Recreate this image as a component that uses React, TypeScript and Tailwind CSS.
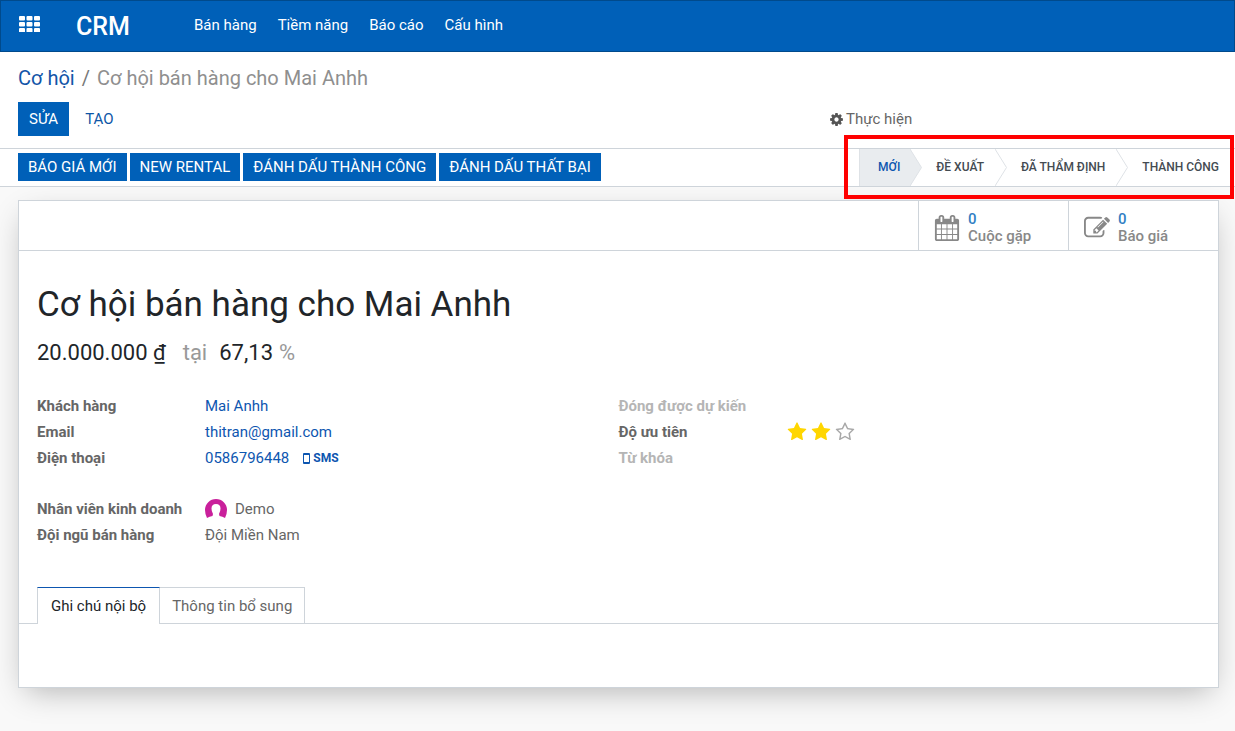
import { ReactNode } from "react";

const ICONS = {
  cog: "M1152 896q0-106-75-181t-181-75-181 75-75 181 75 181 181 75 181-75 75-181zm512-109v222q0 12-8 23t-20 13l-185 28q-19 54-39 91 35 50 107 138 10 12 10 25t-9 23q-27 37-99 108t-94 71q-12 0-26-9l-138-108q-44 23-91 38-16 136-29 186-7 28-36 28h-222q-14 0-24.5-8.5t-11.5-21.5l-28-184q-49-16-90-37l-141 107q-10 9-25 9-14 0-25-11-126-114-165-168-7-10-7-23 0-12 8-23 15-21 51-66.5t54-70.5q-27-50-41-99l-183-27q-13-2-21-12.5t-8-23.5v-222q0-12 8-23t19-13l186-28q14-46 39-92-40-57-107-138-10-12-10-24 0-10 9-23 26-36 98.5-107.5t94.5-71.5q13 0 26 10l138 107q44-23 91-38 16-136 29-186 7-28 36-28h222q14 0 24.5 8.5t11.5 21.5l28 184q49 16 90 37l142-107q9-9 24-9 13 0 25 10 129 119 165 170 7 8 7 22 0 12-8 23-15 21-51 66.5t-54 70.5q26 50 41 98l183 28q13 2 21 12.5t8 23.5z",
  calendar: "M192 1664h288v-288h-288v288zm352 0h320v-288h-320v288zm-352-352h288v-320h-288v320zm352 0h320v-320h-320v320zm-352-384h288v-288h-288v288zm736 736h320v-288h-320v288zm-384-736h320v-288h-320v288zm768 736h288v-288h-288v288zm-384-352h320v-320h-320v320zm-352-864v-288q0-13-9.5-22.5t-22.5-9.5h-64q-13 0-22.5 9.5t-9.5 22.5v288q0 13 9.5 22.5t22.5 9.5h64q13 0 22.5-9.5t9.5-22.5zm736 864h288v-320h-288v320zm-384-384h320v-288h-320v288zm384 0h288v-288h-288v288zm32-480v-288q0-13-9.5-22.5t-22.5-9.5h-64q-13 0-22.5 9.5t-9.5 22.5v288q0 13 9.5 22.5t22.5 9.5h64q13 0 22.5-9.5t9.5-22.5zm384-64v1280q0 52-38 90t-90 38h-1408q-52 0-90-38t-38-90v-1280q0-52 38-90t90-38h128v-96q0-66 47-113t113-47h64q66 0 113 47t47 113v96h384v-96q0-66 47-113t113-47h64q66 0 113 47t47 113v96h128q52 0 90 38t38 90z",
  edit: "M888 1184l116-116-152-152-116 116v56h96v96h56zm440-720q-16-16-33 1l-350 350q-17 17-1 33t33-1l350-350q17-17 1-33zm80 594v190q0 119-84.5 203.5t-203.5 84.5h-832q-119 0-203.5-84.5t-84.5-203.5v-832q0-119 84.5-203.5t203.5-84.5h832q63 0 117 25 15 7 18 23 3 17-9 29l-49 49q-14 14-32 8-23-6-45-6h-832q-66 0-113 47t-47 113v832q0 66 47 113t113 47h832q66 0 113-47t47-113v-126q0-13 9-22l64-64q15-15 35-7t20 29zm-96-738l288 288-672 672h-288v-288zm444 132l-92 92-288-288 92-92q28-28 68-28t68 28l152 152q28 28 28 68t-28 68z",
  star: "M1728 647q0 22-26 48l-363 354 86 500q1 7 1 20 0 21-10.5 35.5t-30.5 14.5q-19 0-40-12l-449-236-449 236q-22 12-40 12-21 0-31.5-14.5t-10.5-35.5q0-6 2-20l86-500-364-354q-25-27-25-48 0-37 56-46l502-73 225-455q19-41 49-41t49 41l225 455 502 73q56 9 56 46z",
  starEmpty: "M1201 1004l306-297-422-62-189-382-189 382-422 62 306 297-73 421 378-199 377 199zm527-357q0 22-26 48l-363 354 86 500q1 7 1 20 0 50-41 50-19 0-40-12l-449-236-449 236q-22 12-40 12-21 0-31.5-14.5t-10.5-35.5q0-6 2-20l86-500-364-354q-25-27-25-48 0-37 56-46l502-73 225-455q19-41 49-41t49 41l225 455 502 73q56 9 56 46z",
};

const MENU = ["Bán hàng", "Tiềm năng", "Báo cáo", "Cấu hình"];
const ACTIONS = ["BÁO GIÁ MỚI", "NEW RENTAL", "ĐÁNH DẤU THÀNH CÔNG", "ĐÁNH DẤU THẤT BẠI"];
const STAGES = ["MỚI", "ĐỀ XUẤT", "ĐÃ THẨM ĐỊNH", "THÀNH CÔNG"];

function Icon({ name, className }: { name: keyof typeof ICONS; className: string }) {
  return (
    <svg viewBox="0 0 1792 1792" fill="currentColor" aria-hidden="true" className={className}>
      <path d={ICONS[name]} />
    </svg>
  );
}

function AppsIcon() {
  return (
    <svg viewBox="0 0 21 16" fill="currentColor" aria-hidden="true" className="h-4 w-[21px]">
      {[0, 6, 12].map((y) =>
        [0, 7.5, 15].map((x) => <rect key={`${x}-${y}`} x={x} y={y} width="6" height="4.5" rx="1" />)
      )}
    </svg>
  );
}

function Navbar() {
  return (
    <header className="flex h-[52px] items-center border border-[#004a8c] bg-[#0060b8] pb-1 pl-[18px] text-white">
      <button aria-label="Apps" className="w-[57px]">
        <AppsIcon />
      </button>
      <a href="#crm" className="w-[118px] pt-[6px] text-[25px] leading-8 font-medium">CRM</a>
      <nav className="flex gap-[21px] pt-[2px]">
        {MENU.map((item) => (
          <a key={item} href="#menu">{item}</a>
        ))}
      </nav>
    </header>
  );
}

function ControlPanel() {
  return (
    <div className="px-[18px] pt-3">
      <ol className="flex text-xl leading-7">
        <li><a href="#pipeline" className="text-[#1355a8]">Cơ hội</a></li>
        <li className="px-[7px] text-[#777]">/</li>
        <li className="text-[#8f8f8f]">Cơ hội bán hàng cho Mai Anhh</li>
      </ol>
      <div className="mt-[10px] mb-3 flex">
        <div className="flex w-[811px]">
          <button className="h-[34px] bg-[#0060b8] px-[11px] text-white">SỬA</button>
          <button className="h-[34px] px-4 text-[#0d56a6]">TẠO</button>
        </div>
        <button className="flex items-center gap-[2px] text-[#666]">
          <Icon name="cog" className="size-[15px] text-[#555]" />
          Thực hiện
        </button>
      </div>
    </div>
  );
}

function Stages() {
  return (
    <div className="relative flex border-l border-[#dee2e6] text-xs font-medium text-[#444b52]">
      {STAGES.map((stage, i) => (
        <button key={stage} aria-pressed={i === 0} className="flex h-[37px] items-center">
          {i === 0 ? (
            <span className="flex h-full items-center bg-[#e9ecef] pr-[10px] pb-[2px] pl-[18px] text-[#0d56b0]">{stage}</span>
          ) : (
            <span className={i < STAGES.length - 1 ? "pr-[11px] pb-[2px] pl-[14px]" : "pb-[2px] pl-[14px]"}>{stage}</span>
          )}
          {i < STAGES.length - 1 && (
            <svg viewBox="0 0 12 37" aria-hidden="true" className="h-[37px] w-3">
              <path d="M0 0L11.5 18.5L0 37" fill={i === 0 ? "#e9ecef" : "none"} stroke="#dee2e6" />
            </svg>
          )}
        </button>
      ))}
      <div className="pointer-events-none absolute -top-[14px] -right-[15px] -bottom-[13px] -left-4 border-4 border-[#ff0000]" />
    </div>
  );
}

function StatusBar() {
  return (
    <div className="flex justify-between border-y border-[#ced4da] pr-4 pl-[18px]">
      <div className="flex items-start gap-[3px] pt-1 text-white">
        {ACTIONS.map((action) => (
          <button key={action} className="h-7 bg-[#0060b8] px-[10px]">{action}</button>
        ))}
      </div>
      <Stages />
    </div>
  );
}

function StatButton({ icon, label }: { icon: keyof typeof ICONS; label: string }) {
  return (
    <button className="flex h-[49px] w-[150px] items-center gap-2 border-l border-[#ced4da] pt-1 pl-[15px] text-left leading-[17px] font-medium text-[#888]">
      <Icon name={icon} className="size-[26px]" />
      <span>
        <span className="block text-[#337fc4]">0</span>
        {label}
      </span>
    </button>
  );
}

function Field({ label, muted, children }: { label: string; muted?: boolean; children?: ReactNode }) {
  return (
    <div className="flex h-[26px] items-center">
      <dt className={muted ? "w-[168px] font-bold text-[#b5b5b5]" : "w-[168px] font-bold text-[#666]"}>{label}</dt>
      <dd className="flex items-center">{children}</dd>
    </div>
  );
}

function Priority() {
  return (
    <div className="flex gap-1">
      {[1, 2, 3].map((n) => (
        <button key={n} aria-label={`Ưu tiên ${n}`}>
          {n < 3 ? (
            <Icon name="star" className="size-5 text-[#ffd600]" />
          ) : (
            <Icon name="starEmpty" className="size-5 text-[#a8a8a8]" />
          )}
        </button>
      ))}
    </div>
  );
}

function Details() {
  return (
    <div className="grid grid-cols-2">
      <div>
        <dl>
          <Field label="Khách hàng">
            <a href="#partner" className="text-[#0d56b0]">Mai Anhh</a>
          </Field>
          <Field label="Email">
            <a href="mailto:thitran@gmail.com" className="text-[#0d56b0]">thitran@gmail.com</a>
          </Field>
          <Field label="Điện thoại">
            <a href="tel:0586796448" className="text-[#0d56b0]">0586796448</a>
            <button className="ml-[14px] flex items-center gap-[3px] text-xs font-bold text-[#0d56b0]">
              <svg viewBox="0 0 7 11" aria-hidden="true" className="h-[11px] w-[7px]">
                <path fill="currentColor" fillRule="evenodd" d="M1 0h5q1 0 1 1v9q0 1-1 1H1q-1 0-1-1V1q0-1 1-1zM1 2v7h5V2z" />
              </svg>
              SMS
            </button>
          </Field>
        </dl>
        <dl className="mt-[25px]">
          <Field label="Nhân viên kinh doanh">
            <svg viewBox="0 0 22 20" aria-hidden="true" className="mr-2 h-5 w-[22px]">
              <path fill="#c9209b" d="M2 19Q0 15 0 11A11 11 0 0 1 22 11Q22 15 20 19Q17.500 17.500 14.500 17L14 15Q15.500 12.500 15.500 9.500Q15.500 5 11 5Q6.500 5 6.500 9.500Q6.500 12.500 8 15L7.500 17Q4.500 17.500 2 19z" />
            </svg>
            Demo
          </Field>
          <Field label="Đội ngũ bán hàng">Đội Miền Nam</Field>
        </dl>
      </div>
      <dl>
        <Field label="Đóng được dự kiến" muted />
        <Field label="Độ ưu tiên">
          <Priority />
        </Field>
        <Field label="Từ khóa" muted />
      </dl>
    </div>
  );
}

function Notebook() {
  return (
    <div>
      <div role="tablist" className="flex border-b border-[#ced4da] pl-[18px]">
        <button role="tab" aria-selected="true" className="-mb-px h-[37px] border-x border-t border-x-[#ced4da] border-t-[#0d56b0] bg-white px-[13px] text-[#212529]">
          Ghi chú nội bộ
        </button>
        <button role="tab" aria-selected="false" className="h-9 border-t border-r border-[#ced4da] px-3">
          Thông tin bổ sung
        </button>
      </div>
      <div role="tabpanel" className="h-[63px]" />
    </div>
  );
}

function Sheet() {
  return (
    <main className="border border-[#ced4da] bg-white shadow-[0_10px_30px_-8px_rgba(0,0,0,0.3)]">
      <div className="flex justify-end border-b border-[#ced4da]">
        <StatButton icon="calendar" label="Cuộc gặp" />
        <StatButton icon="edit" label="Báo giá" />
      </div>
      <div className="px-[18px] pt-[33px] pb-[39px]">
        <h1 className="text-[35px] leading-[42px] text-[#212529]">Cơ hội bán hàng cho Mai Anhh</h1>
        <h2 className="mt-[11px] mb-6 flex text-[22px] leading-8 text-[#212529]">
          <span>20.000.000 ₫</span>
          <span className="ml-[17px] text-[#999]">tại</span>
          <span className="ml-3">67,13</span>
          <span className="ml-[6px] text-[#999]">%</span>
        </h2>
        <Details />
      </div>
      <Notebook />
    </main>
  );
}

export default function App() {
  return (
    <div className="min-h-screen bg-[#f9f9f9] font-['Roboto','Noto_Sans',sans-serif] text-[15px] leading-5 text-[#666]">
      <Navbar />
      <div className="relative bg-white">
        <ControlPanel />
        <StatusBar />
      </div>
      <div className="pt-[13px] pr-4 pb-10 pl-[18px]">
        <Sheet />
      </div>
    </div>
  );
}
